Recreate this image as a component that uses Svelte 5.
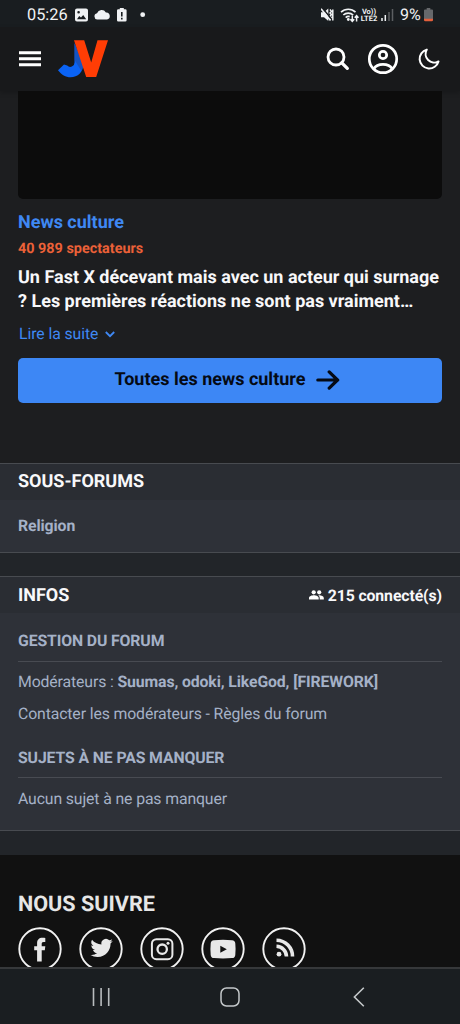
<script>
	const moderators = 'Suumas, odoki, LikeGod, [FIREWORK]';
	const socials = ['facebook', 'twitter', 'instagram', 'youtube', 'rss'];
</script>

<div class="screen">
	<div class="status">
		<span class="time">05:26</span>
		<svg class="notifications" width="74" height="16" viewBox="0 0 74 16" fill="#f0f2f4">
			<path
				fill-rule="evenodd"
				d="M3 1.500h9a2 2 0 0 1 2 2v9a2 2 0 0 1-2 2H3a2 2 0 0 1-2-2v-9a2 2 0 0 1 2-2zM3 12.300h9.200L9.200 8 7 10.600 5.200 9zM4.600 4a1.300 1.300 0 1 0 0 2.600 1.300 1.300 0 0 0 0-2.600z"
			/>
			<path
				d="M23.200 12.500a3.200 3.200 0 0 1-.2-6.300 5 5 0 0 1 8.900-.8 4 4 0 0 1 .5 0 3.600 3.600 0 0 1 .6 7.100z"
			/>
			<path
				fill-rule="evenodd"
				d="M45.800 1h4v1.300h1.500a1.300 1.300 0 0 1 1.300 1.300v9.700a1.300 1.300 0 0 1-1.300 1.300h-7a1.300 1.300 0 0 1-1.300-1.300V3.600a1.300 1.300 0 0 1 1.300-1.300h1.500zM47 5v4.500h1.600V5zM47 10.800v1.600h1.600v-1.600z"
			/>
			<circle cx="68.700" cy="7.700" r="2.400" />
		</svg>
		<div class="signals">
			<svg width="13" height="16" viewBox="0 0 13 16">
				<path d="M0 5.200h3L7.300 1.500v12.500L3 10.300H0z" fill="#f0f2f4" />
				<path
					d="M9 2.500l1.500 1.900L9 6l1.500 1.500L9 9l1.500 1.500L9 12.500M11.800 2.500v11"
					fill="none"
					stroke="#f0f2f4"
					stroke-width="1.500"
				/>
				<path d="M1.800 1.500l9 11" stroke="#191c1f" stroke-width="1.500" />
				<path d="M0 1.800l9.500 11.700" stroke="#f0f2f4" stroke-width="1.600" />
			</svg>
			<svg class="wifi" width="19" height="16" viewBox="0 0 19 16" fill="none" stroke="#f0f2f4">
				<path
					d="M1 5.200a10.400 10.400 0 0 1 14.500 0M3.300 8a7.200 7.200 0 0 1 9.900 0M5.700 10.600a4 4 0 0 1 4-1"
					stroke-width="1.700"
				/>
				<circle cx="8.300" cy="12.500" r="1.400" fill="#f0f2f4" stroke="none" />
				<path
					d="M12.300 8.500v5.700M10.400 12.300l1.900 2 1.900-2M16.600 14.500V8.800M14.700 10.700l1.900-2 1.900 2"
					stroke-width="1.500"
				/>
			</svg>
			<span class="lte"><b>Vo))</b><b>LTE2</b></span>
			<svg class="bars" width="13" height="13" viewBox="0 0 13 13">
				<path d="M1 10v3M4.300 7v6" stroke="#f0f2f4" stroke-width="1.500" />
				<path d="M8 4v9M11.500 1v12" stroke="#5c5f62" stroke-width="1.500" />
			</svg>
			<span class="percent">9%</span>
			<svg class="battery" width="9" height="14" viewBox="0 0 9 14">
				<path d="M2.700 0h3.600v1.500H8a1 1 0 0 1 1 1V11H0V2.500a1 1 0 0 1 1-1h1.700z" fill="#66686b" />
				<path d="M0 10.800h9V12a1.300 1.300 0 0 1-1.300 1.300H1.300A1.300 1.300 0 0 1 0 12z" fill="#e5603c" />
			</svg>
		</div>
	</div>

	<header>
		<svg class="menu" width="22" height="16" viewBox="0 0 22 16" fill="#fff">
			<path d="M0 .3h22v2.900H0zM0 6.300h22v2.900H0zM0 12.300h22v2.900H0z" />
		</svg>
		<svg class="logo" width="51" height="38" viewBox="0 0 51 38">
			<path
				d="M16.500 3v19.500a4.200 4.200 0 0 1-7.300 3L6 24.400 0 30.300c3.400 4.600 7.700 7 12.500 7 7.500 0 12.700-5.400 12.700-12.500z"
				fill="#0a63f5"
			/>
			<path d="M16.500 3v17l7 11a13 13 0 0 0 1.700-6z" fill="#1b4ba5" opacity=".65" />
			<path d="M16 .3h10.200L33.200 22.500 39.500.3H50L38.200 37H28.200z" fill="#ff3d05" />
		</svg>
		<div class="actions">
			<svg width="24" height="24" viewBox="0 0 24 24" fill="none" stroke="#fff">
				<circle cx="10" cy="10" r="8" stroke-width="2.800" />
				<path d="M15.800 15.800l5.500 5.500" stroke-width="3.300" stroke-linecap="round" />
			</svg>
			<svg class="user" width="32" height="32" viewBox="0 0 32 32" fill="none" stroke="#fff" stroke-width="2.700">
				<circle cx="16" cy="16" r="13.700" />
				<circle cx="16" cy="12" r="3.700" />
				<path d="M7 25.500c1.600-2.800 5-4.200 9-4.200s7.400 1.400 9 4.200" />
			</svg>
			<svg class="moon" width="22" height="22" viewBox="0 0 22 22" fill="none" stroke="#fff" stroke-width="2">
				<path
					d="M8.800 1.600A9.600 9.600 0 1 0 20.500 13.400 8.600 8.600 0 0 1 8.800 1.600z"
					stroke-linejoin="round"
				/>
			</svg>
		</div>
	</header>

	<main>
		<div class="media"></div>
		<div class="category">News culture</div>
		<div class="viewers">40 989 spectateurs</div>
		<h2>
			Un Fast X décevant mais avec un acteur qui surnage<br />? Les premières réactions ne sont pas
			vraiment…
		</h2>
		<a class="more" href="#suite">
			Lire la suite
			<svg width="10" height="7" viewBox="0 0 10 7" fill="none" stroke="#3f88f3" stroke-width="1.800">
				<path d="M.8 1l4.200 4.200L9.200 1" />
			</svg>
		</a>
		<button>
			Toutes les news culture
			<svg width="24" height="20" viewBox="0 0 24 20" fill="none" stroke="#050a14" stroke-width="3.200">
				<path
					d="M1.800 10h20M13.200 1.900l8.300 8.100-8.300 8.100"
					stroke-linecap="round"
					stroke-linejoin="round"
				/>
			</svg>
		</button>
	</main>

	<div class="forums">
		<section>
			<div class="heading subforums">SOUS-FORUMS</div>
			<div class="sub">Religion</div>
		</section>
		<section class="infos">
			<div class="heading">
				INFOS
				<span class="online">
					<svg width="15" height="10" viewBox="0 0 15 10" fill="#fff">
						<circle cx="4.700" cy="2.300" r="2.100" />
						<circle cx="10.200" cy="2.300" r="2.100" />
						<path
							d="M0 9.500V8c0-2 3-2.800 4.900-2.800S9.700 6 9.700 8v1.500zM10.700 9.500V8c0-1.200-.5-2-1.300-2.600 2.200-.3 5.400.5 5.400 2.600v1.500z"
						/>
					</svg>
					<span class="count">215 connecté(s)</span>
				</span>
			</div>
			<div class="body">
				<h3>GESTION DU FORUM</h3>
				<p class="mods">Modérateurs : <b>{moderators}</b></p>
				<p class="contact">Contacter les modérateurs - Règles du forum</p>
				<h3 class="topics">SUJETS À NE PAS MANQUER</h3>
				<p class="none">Aucun sujet à ne pas manquer</p>
			</div>
		</section>
	</div>

	<footer>
		<div class="follow">NOUS SUIVRE</div>
		<div class="socials">
			{#each socials as name}
				<svg width="44" height="44" viewBox="0 0 44 44" fill="#e8e8e8">
					<circle cx="22" cy="22" r="20.700" fill="none" stroke="#f2f2f2" stroke-width="1.900" />
					{#if name === 'facebook'}
						<path
							d="M19.100 34.500V23.300h-2.900v-4.100h2.900v-2.900c0-3.800 2-5.600 5.300-5.600 1.200 0 2.200.1 2.900.2v4.200h-1.700c-1.600 0-1.900.9-1.900 2.100v2h3.600l-.5 4.100h-3.100v11.200z"
						/>
					{:else if name === 'twitter'}
						<path
							transform="translate(11.500 9.800) scale(.93)"
							d="M23.950 4.570a10 10 0 0 1-2.820.77 4.960 4.960 0 0 0 2.160-2.720c-.95.550-2 .960-3.130 1.180a4.920 4.920 0 0 0-8.380 4.480C7.690 8.090 4.070 6.130 1.640 3.160a4.920 4.920 0 0 0 1.520 6.570 4.900 4.900 0 0 1-2.230-.61v.06a4.920 4.920 0 0 0 3.950 4.830 5 5 0 0 1-2.210.08 4.940 4.940 0 0 0 4.600 3.420A9.870 9.870 0 0 1 0 19.540a13.990 13.990 0 0 0 7.550 2.210c9.050 0 14-7.500 14-13.980 0-.21 0-.42-.02-.63a9.940 9.940 0 0 0 2.420-2.570z"
						/>
					{:else if name === 'instagram'}
						<rect
							x="11.900"
							y="12.200"
							width="20.500"
							height="20"
							rx="4.500"
							fill="none"
							stroke="#e8e8e8"
							stroke-width="2"
						/>
						<circle cx="22.200" cy="22.200" r="4.700" fill="none" stroke="#e8e8e8" stroke-width="2.300" />
						<circle cx="28" cy="16.300" r="1.500" />
					{:else if name === 'youtube'}
						<path
							fill-rule="evenodd"
							d="M13 13.200q9-.8 18 0a3.500 3.500 0 0 1 3.300 3.200q.6 5.700 0 11.500a3.500 3.500 0 0 1-3.300 3.200q-9 .8-18 0a3.500 3.500 0 0 1-3.300-3.200q-.6-5.800 0-11.500a3.500 3.500 0 0 1 3.300-3.200zM19.300 18.700v7l6.500-3.500z"
						/>
					{:else}
						<circle cx="17" cy="27.200" r="2.400" />
						<path
							d="M14.500 19.300a10.300 10.300 0 0 1 10 10.300M14.500 13.200a16.200 16.200 0 0 1 16 16.400"
							fill="none"
							stroke="#e8e8e8"
							stroke-width="3.600"
						/>
					{/if}
				</svg>
			{/each}
		</div>
	</footer>

	<nav>
		<svg width="20" height="20" viewBox="0 0 20 20" stroke="#b8bcbe" stroke-width="1.600">
			<path d="M2.500 1v18M10.100 1v18M17.700 1v18" />
		</svg>
		<svg width="20" height="20" viewBox="0 0 20 20" fill="none" stroke="#c4c8ca" stroke-width="1.500">
			<rect x="1" y="1" width="18" height="18" rx="5.500" />
		</svg>
		<svg width="20" height="20" viewBox="0 0 20 20" fill="none" stroke="#c4c8ca" stroke-width="1.600">
			<path d="M14.800.8L5.400 10l9.400 9.200" />
		</svg>
	</nav>
</div>

<style>
	:global(body) {
		background: #1d1e20;
		margin: 0;
	}

	.screen {
		background: #1d1e20;
		box-sizing: border-box;
		color: #f8f8fa;
		display: flex;
		flex-direction: column;
		font-family: Roboto, 'Noto Sans', sans-serif;
		height: 1024px;
		overflow: hidden;
		text-rendering: geometricPrecision;
		width: 460px;
	}

	svg {
		display: block;
		flex: none;
	}

	.status {
		align-items: center;
		background: #191d20;
		box-sizing: border-box;
		display: flex;
		flex: none;
		height: 27px;
		padding: 2px 27px 0 27px;
	}

	.time {
		color: #f0f2f4;
		font-size: 16.300px;
		line-height: 25px;
		width: 47px;
	}

	.signals {
		align-items: center;
		display: flex;
		margin-left: auto;
	}

	.wifi {
		margin-left: 6px;
	}

	.lte {
		color: #f0f2f4;
		display: flex;
		flex-direction: column;
		font-size: 7.500px;
		line-height: 7px;
		margin-left: 1px;
		text-align: center;
		width: 18px;
	}

	.bars {
		margin-left: 3px;
	}

	.percent {
		color: #f0f2f4;
		font-size: 16px;
		margin-left: 6px;
		width: 21px;
	}

	.battery {
		margin-left: 3px;
	}

	header {
		align-items: center;
		background: #18191b;
		box-shadow: 0 2px 5px rgba(0, 0, 0, 0.2);
		box-sizing: border-box;
		display: flex;
		flex: none;
		height: 64px;
		padding: 0 20px 0 19px;
	}

	.logo {
		margin-left: 17px;
	}

	.actions {
		align-items: center;
		display: flex;
		margin-left: auto;
	}

	.user {
		margin-left: 17px;
	}

	.moon {
		margin-left: 19px;
	}

	main {
		display: flex;
		flex: none;
		flex-direction: column;
		height: 372px;
		padding: 0 18px;
	}

	.media {
		background: #0c0c0c;
		border-radius: 0 0 5px 5px;
		height: 108px;
	}

	.category {
		color: #3f88f3;
		font-size: 18px;
		font-weight: 700;
		line-height: 20px;
		margin-top: 14px;
	}

	.viewers {
		color: #ec6138;
		font-size: 14.400px;
		font-weight: 700;
		line-height: 20px;
		margin-top: 6px;
	}

	h2 {
		font-size: 18px;
		font-weight: 700;
		line-height: 24px;
		margin: 7px 0 0;
		white-space: nowrap;
	}

	.more {
		align-items: center;
		color: #3f88f3;
		display: flex;
		font-size: 15.700px;
		gap: 7px;
		letter-spacing: -0.050px;
		line-height: 20px;
		margin: 10px 0 0 1px;
		text-decoration: none;
	}

	button {
		align-items: center;
		background: #3d87f5;
		border: 0;
		border-radius: 5px;
		color: #050a14;
		display: flex;
		flex: none;
		font-family: inherit;
		font-size: 18px;
		font-weight: 700;
		gap: 11px;
		height: 45.500px;
		justify-content: center;
		margin-top: 13.500px;
		padding: 0 5px 1px 0;
		text-rendering: inherit;
	}

	.forums {
		background: #222529;
		flex: none;
		height: 392px;
	}

	section {
		background: #2e3138;
		border-bottom: 1px solid #484b50;
		border-top: 1px solid #484b50;
		box-sizing: border-box;
		height: 90px;
	}

	.infos {
		height: 255px;
		margin-top: 23px;
	}

	.heading {
		align-items: center;
		background: #2a2d33;
		box-sizing: border-box;
		display: flex;
		font-size: 18px;
		font-weight: 700;
		height: 36px;
		justify-content: space-between;
		padding: 0 18px;
	}

	.subforums {
		padding-bottom: 2px;
	}

	.sub {
		color: #a5b1c7;
		font-size: 15.800px;
		font-weight: 700;
		letter-spacing: -0.100px;
		line-height: 20px;
		margin: 16px 18px 0;
	}

	.online {
		align-items: center;
		display: flex;
		font-size: 15.800px;
		gap: 4px;
		letter-spacing: -0.100px;
	}

	.body {
		color: #a5b1c7;
		letter-spacing: -0.120px;
		padding: 18px 18px 0;
	}

	h3 {
		border-bottom: 1px solid #484b52;
		font-size: 15.800px;
		font-weight: 700;
		line-height: 20px;
		margin: 0;
		padding-bottom: 10px;
	}

	p {
		font-size: 15.800px;
		line-height: 20px;
		margin: 10px 0 0;
		white-space: nowrap;
	}

	b {
		font-weight: 700;
	}

	.contact {
		margin-top: 12px;
	}

	.topics {
		margin-top: 24px;
		padding-bottom: 9px;
	}

	.none {
		margin-top: 11px;
	}

	footer {
		background: #111;
		box-sizing: border-box;
		flex: none;
		height: 112px;
		overflow: hidden;
		padding: 37px 18px 0;
	}

	.follow {
		color: #e6e6e6;
		font-size: 21.600px;
		font-weight: 700;
		line-height: 26px;
	}

	.socials {
		display: flex;
		gap: 17.100px;
		margin: 9px 0 0 -0.500px;
	}

	nav {
		align-items: center;
		background: #1a1e21;
		border-top: 2px solid #36383a;
		box-sizing: border-box;
		display: flex;
		flex: none;
		height: 57px;
		justify-content: space-between;
		padding: 1px 91px 0;
	}
</style>
